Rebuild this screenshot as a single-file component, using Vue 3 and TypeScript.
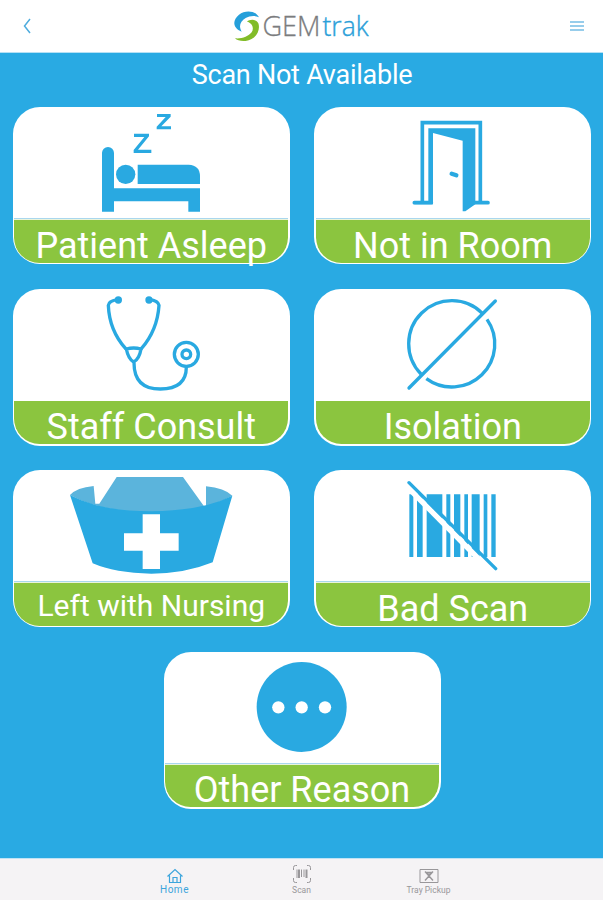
<script setup lang="ts">
import { ref } from 'vue'

type Icon = 'asleep' | 'door' | 'consult' | 'isolation' | 'nursing' | 'barcode' | 'other'

interface Reason {
  id: Icon
  label: string
  box: string
}

const reasons: Reason[] = [
  { id: 'asleep', label: 'Patient Asleep', box: '39 21 831 330' },
  { id: 'door', label: 'Not in Room', box: '34 21 831 330' },
  { id: 'consult', label: 'Staff Consult', box: '39 26 831 330' },
  { id: 'isolation', label: 'Isolation', box: '34 26 831 330' },
  { id: 'nursing', label: 'Left with Nursing', box: '39 29 831 330' },
  { id: 'barcode', label: 'Bad Scan', box: '34 29 831 330' },
  { id: 'other', label: 'Other Reason', box: '40 35 831 330' },
]

const tabs = ['Home', 'Scan', 'Tray Pickup']
const activeTab = ref('Home')
</script>

<template>
  <div class="screen">
    <header class="topbar">
      <button class="bare" aria-label="Back">
        <svg width="12" height="18" viewBox="0 0 12 18"><path d="M9 2 3.500 9 9 16" fill="none" stroke="#4eacde" stroke-width="1.5" /></svg>
      </button>
      <svg class="logo" width="142" height="36" viewBox="0 0 142 36">
        <g transform="translate(-3 -2) scale(.3333)">
          <path d="M96 34C84 12 54 12 36 26C16 42 16 66 44 77C34 60 40 46 56 36C68 29 84 27 96 34Z" fill="#259fda" />
          <path d="M60 47C68 40 86 38 94 52C102 74 84 103 56 105C42 106 30 104 24 97C44 99 64 92 74 79C82 67 76 50 60 47Z" fill="#82bc28" />
        </g>
        <text x="32.500" y="27.500" font-size="27.500" textLength="58" lengthAdjust="spacingAndGlyphs" fill="#7b7c7e" stroke="#7b7c7e" stroke-width=".3">GEM</text>
        <text x="92.500" y="27.500" font-size="27.500" textLength="46" lengthAdjust="spacingAndGlyphs" fill="#2b9fd9" stroke="#2b9fd9" stroke-width=".4">trak</text>
      </svg>
      <button class="bare" aria-label="Menu">
        <svg width="16" height="14" viewBox="0 0 16 14"><path d="M1 3h14M1 7h14M1 11h14" stroke="#75bde5" stroke-width="1.4" /></svg>
      </button>
    </header>

    <main class="content">
      <h1>Scan Not Available</h1>
      <div class="grid">
        <button v-for="reason in reasons" :key="reason.id" class="card" :class="reason.id">
          <svg class="art" width="277" height="110" :viewBox="reason.box" fill="#29a9e1">
            <g v-if="reason.id === 'asleep'">
              <path d="M306 335V159a18 18 0 0 1 36 0V265H600V335H565V304H342V335Z" />
              <circle cx="377" cy="223" r="29" />
              <path d="M413 194H566Q600 196 600 229V252H413Z" />
              <path d="M402 101H447V109L414 149H454V159H401V150L433 111H402Z" />
              <path d="M471 42H512V50L484 79H513V88H470V80L497 51H471Z" />
            </g>
            <g v-else-if="reason.id === 'door'">
              <path d="M359 307V68H533V307" fill="none" stroke="#29a9e1" stroke-width="11" />
              <path fill-rule="evenodd" d="M377 85H518V313L488 334H480V122L391 99V313H335V303H377Z" />
              <path d="M335 308H386M517 308H556" fill="none" stroke="#29a9e1" stroke-width="11" stroke-linecap="round" />
              <path d="M447 221L461 226" stroke="#29a9e1" stroke-width="13" stroke-linecap="round" />
            </g>
            <g v-else-if="reason.id === 'consult'" fill="none" stroke="#29a9e1" stroke-width="10" stroke-linecap="round">
              <path d="M354 58Q326 61 325 75Q328 150 377 205M447 58Q475 61 477 75Q472 150 424 205" />
              <path d="M379 206Q401 200 423 206Q418 236 401 245Q385 236 379 206ZM402 247C402 297 425 326 481 326C536 326 559 302 559 260" />
              <circle cx="559" cy="222" r="36" /><circle cx="559" cy="222" r="13" />
              <circle cx="355" cy="59" r="6" /><circle cx="447" cy="59" r="6" />
            </g>
            <g v-else-if="reason.id === 'isolation'" fill="none" stroke="#29a9e1" stroke-width="10">
              <path d="M355 281A129 129 0 0 1 540 100M553 117A129 129 0 0 1 371 295" />
              <path d="M319 323L578 62" stroke-linecap="round" />
            </g>
            <g v-else-if="reason.id === 'nursing'">
              <path d="M210 104Q230 82 281 77L286 130H298L350 50H549L612 138H618V78Q674 84 697 106Q600 161 454 157Q300 155 210 104Z" fill="#5bb4dc" />
              <path d="M210 104Q300 153 454 153Q608 151 697 106L638 306Q555 340 454 340Q345 338 278 309Z" />
              <path d="M428 162H480V219H536V271H480V326H428V271H372V219H428Z" fill="#fff" />
            </g>
            <g v-else-if="reason.id === 'barcode'">
              <path d="M320 102H332V290H320ZM343 102H360V290H343ZM372 102H419V290H372ZM431 102H443V290H431ZM454 102H473V290H454ZM485 102H496V290H485ZM507 102H531V290H507ZM543 102H554V290H543ZM566 102H579V290H566Z" />
              <path d="M310 76L570 338" stroke="#fff" stroke-width="16" />
              <path d="M319 67L579 325" stroke="#29a9e1" stroke-width="10" stroke-linecap="round" />
            </g>
            <g v-else>
              <circle cx="456" cy="200" r="135" />
              <circle v-for="cx in [386, 456, 526]" :key="cx" :cx="cx" cy="201" r="18.5" fill="#fff" />
            </g>
          </svg>
          <span class="label">{{ reason.label }}</span>
        </button>
      </div>
    </main>

    <nav class="tabs">
      <button v-for="tab in tabs" :key="tab" class="tab" :class="{ active: tab === activeTab }" @click="activeTab = tab">
        <svg v-if="tab === 'Home'" width="18" height="16" viewBox="0 0 18 16" fill="none" stroke="currentColor" stroke-width="1.2">
          <path d="M1.5 8.5 9 1.5 16.5 8.5M3.5 7.5V14.5H14.5V7.5M7 14V9.5H11V14" />
        </svg>
        <svg v-else-if="tab === 'Scan'" width="20" height="20" viewBox="0 0 20 20" fill="none" stroke="currentColor" stroke-width="1">
          <path d="M5 1.5H3.5Q1.5 1.5 1.5 3.5V6M15 1.5H16.500Q18.500 1.500 18.500 3.500V6M1.500 14V16.500Q1.500 18.500 3.500 18.500H5M18.500 14V16.500Q18.500 18.500 16.500 18.500H15" />
          <path d="M5 5.500V14M9.500 5.500V13M12 5.500V13" />
          <path d="M7 5.500V14M14.500 5.500V14" stroke-width="2" />
        </svg>
        <svg v-else width="20" height="16" viewBox="0 0 20 16" fill="none" stroke="currentColor" stroke-width="1">
          <path d="M1 1.500H19V14.500H1Z" />
          <path d="M6 3.500 14 12.500M14 3.500 6 12.500M8 4.500h4l-2 3Z" stroke-width="1.400" />
        </svg>
        <span>{{ tab }}</span>
      </button>
    </nav>
  </div>
</template>

<style>
body {
  margin: 0;
}
</style>

<style scoped>
.screen {
  display: flex;
  flex-direction: column;
  width: 603px;
  height: 900px;
  background: #29aae3;
  font-family: Roboto, 'Liberation Sans', sans-serif;
}
button {
  padding: 0;
  border: 0;
  background: none;
  font: inherit;
}
svg {
  display: block;
}
.topbar {
  display: flex;
  align-items: center;
  justify-content: space-between;
  height: 53px;
  padding: 0 18px 0 21px;
  box-sizing: border-box;
  background: #fff;
  border-bottom: 1px solid #b5e0f5;
}
.logo {
  overflow: visible;
  font-family: 'Open Sans', 'Noto Sans', sans-serif;
  font-weight: 300;
}
.content {
  flex: 1;
}
h1 {
  margin: 0;
  height: 54px;
  line-height: 45px;
  text-align: center;
  font-size: 27px;
  letter-spacing: -0.250px;
  font-weight: 400;
  color: #fff;
  padding-left: 1px;
  box-sizing: border-box;
}
.grid {
  display: flex;
  flex-wrap: wrap;
  justify-content: center;
  gap: 24.500px;
  padding-left: 1px;
}
.card {
  display: flex;
  flex-direction: column;
  width: 277px;
  height: 157px;
  box-sizing: border-box;
  border-radius: 27px;
  background: #fff;
}
.art {
  flex: none;
}
.other .art {
  margin-left: -0.500px;
}
.label {
  flex: none;
  align-self: stretch;
  box-sizing: border-box;
  height: 44.500px;
  margin: 1px 1.500px 0;
  padding-top: 9.500px;
  border-top: 1px solid #a9d7ee;
  box-shadow: inset 0 1px #eaf4dc;
  border-radius: 0 0 25.500px 25.500px;
  background: #8bc53f;
  color: #fff;
  font-size: 36px;
  line-height: 35px;
  text-align: center;
  white-space: nowrap;
}
.consult .label,
.isolation .label {
  margin-top: 2.500px;
  height: 43px;
  padding-top: 9px;
  border-top: 0;
  box-shadow: none;
}
.nursing .label {
  padding-top: 6px;
  font-size: 30px;
}
.tabs {
  display: flex;
  justify-content: center;
  height: 42.500px;
  box-sizing: border-box;
  border-top: 1px solid #bfe3f5;
  background: #f5f3f5;
}
.tab {
  display: flex;
  flex-direction: column;
  align-items: center;
  justify-content: flex-end;
  width: 127px;
  padding-bottom: 4px;
  color: #99979a;
  font-size: 8.500px;
  line-height: 12px;
}
.tab.active {
  color: #3da5dc;
  font-size: 10px;
  letter-spacing: 0.500px;
}
</style>
